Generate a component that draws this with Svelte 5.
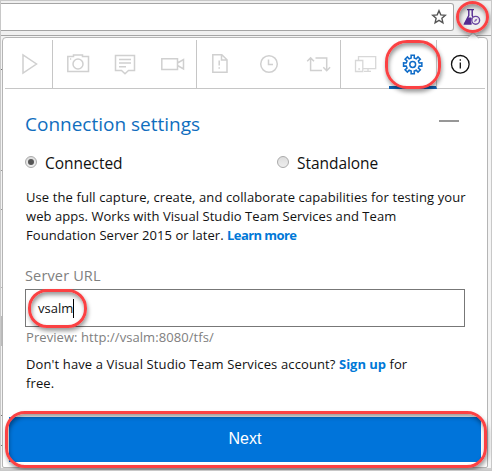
<script>
  const tabs = ['play', 'camera', 'comment', 'video', 'report', 'clock', 'loop', 'devices', 'settings', 'info'];
  const separated = new Set(['play', 'video', 'loop', 'settings']);
  let server = $state('vsalm');

  const gearPoints = Array.from({ length: 8 }, (_, i) => {
    return [[-13, 6.7], [-10, 9.3], [10, 9.3], [13, 6.7]].map(([offset, radius]) => {
      const angle = ((i * 45 + offset) * Math.PI) / 180;
      return `${(12.7 + radius * Math.cos(angle)).toFixed(2)},${(12.5 + radius * Math.sin(angle)).toFixed(2)}`;
    }).join(' ');
  }).join(' ');
</script>

<div class="window">
  <header class="browser">
    <div class="address">
      <svg class="star" width="16" height="16" viewBox="0 0 16 16"><path d="M8 1.7l1.8 4.2 4.5.4-3.4 3 1 4.5L8 11.4l-3.9 2.4 1-4.5-3.4-3 4.5-.4z" /></svg>
    </div>
    <svg class="flask" width="18" height="18" viewBox="0 0 18 18">
      <path d="M4 1.6h7M5.8 2v5.5L1.5 15.8H8M9.2 2v5.5l.8 1.3" fill="none" stroke="#542b91" stroke-width="1.4" />
      <path d="M4.5 9.5h3.8l.5 1.2-1 2.3 1.2 3.4H.8z" fill="#542b91" />
      <circle cx="12.7" cy="12.3" r="3.9" fill="#f0f0f0" stroke="#6842a0" stroke-width="1.4" />
      <path d="M10.8 14.2l1.2-2.6 2.6-1.2-1.2 2.6z" fill="#8b68b8" />
    </svg>
  </header>

  <main class="popup">
    <svg class="pointer" width="12" height="7" viewBox="0 0 12 7"><path d="M0 6.5L6 .5l6 6" fill="#fff" stroke="#bbb" /></svg>
    <nav>
      {#each tabs as tab}
        <button class:sep={separated.has(tab)} class:active={tab === 'settings'} aria-label={tab}>
          <svg width="26" height="24" viewBox="0 0 26 24" class={tab}>
            {#if tab === 'play'}
              <path d="M6 3v18L19.5 12z" />
            {:else if tab === 'camera'}
              <path d="M3.8 4.5H9.5V3h9v1.5h6v15H3.8z" /><circle cx="14" cy="12" r="5" /><path d="M6 7h1.2" />
            {:else if tab === 'comment'}
              <path d="M3.5 3.5h19v15h-6L13 21.7l-3.5-3.2h-6zM7 7.5h12M7 11h12M7 14.7h7" />
            {:else if tab === 'video'}
              <path d="M1.8 6.8h15.7v10.7H1.8zM17.5 11l6-3.5v9.5l-6-3.5" />
            {:else if tab === 'report'}
              <path d="M4.8 2.7h9l5.2 5v12.6H4.8zM13.5 3v5H19M11.2 8.5v5M11.2 15.2v1.6" />
            {:else if tab === 'clock'}
              <circle cx="13" cy="12" r="8.3" /><path d="M12.5 7.5v5H17" />
            {:else if tab === 'loop'}
              <path d="M6.6 6.2v12.4H18M3.2 9.3l3.4-3.4L10 9.3M11.5 6h11.2v12.4M19.3 15.3l3.4 3.4 3.4-3.4" />
            {:else if tab === 'devices'}
              <path d="M6.5 8V4.6h17.2v12H11M3.5 8.5h7.3v11H3.5zM6.3 17h1.8M12 19.4h7M16 16.6v2.8" />
            {:else if tab === 'settings'}
              <polygon points={gearPoints} />
              <circle cx="12.7" cy="12.5" r="2.9" />
            {:else}
              <circle cx="12.3" cy="12.3" r="8.8" /><path d="M12.3 10.5v6M12.3 7.2v1.6" />
            {/if}
          </svg>
        </button>
      {/each}
    </nav>

    <section class="settings-panel">
      <div class="heading"><h1>Connection settings</h1><span class="collapse"></span></div>
      <div class="modes">
        <label><span class="radio checked"></span><span>Connected</span></label>
        <label><span class="radio"></span><span>Standalone</span></label>
      </div>
      <p class="description">
        <span class="d1">Use the full capture, create, and collaborate capabilities for testing your</span><br /><span class="d2">web apps. Works with Visual Studio Team Services and Team</span><br /><span class="d2">Foundation Server 2015 or later. <b class="more">Learn more</b></span>
      </p>
      <div class="label">Server URL</div>
      <div class="field"><span>{server}</span><i class="caret"></i></div>
      <div class="preview">Preview: http://{server}:8080/tfs/</div>
      <p class="signup">Don't have a Visual Studio Team Services account? <b>Sign up</b> for<br />free.</p>
    </section>
    <button class="next">Next</button>
  </main>

  <i class="mark extension"></i>
  <i class="mark gear"></i>
  <i class="mark url"></i>
  <i class="mark submit"></i>
</div>

<style>
  * { box-sizing: border-box; }
  .window {
    position: relative; width: 492px; height: 471px; padding: 0 3px 0 1px; overflow: hidden;
    background:
      linear-gradient(#777, #777) 0 68px / 1px 1px no-repeat,
      linear-gradient(#999, #999) 0 169px / 1px 1px no-repeat,
      linear-gradient(#999, #999) 0 208px / 1px 1px no-repeat,
      linear-gradient(#bbb, #bbb) 0 286px / 1px 1px no-repeat,
      linear-gradient(#bbb, #bbb) 0 315px / 1px 30px no-repeat,
      linear-gradient(#777, #777) 0 414px / 1px 1px no-repeat,
      linear-gradient(#777, #777) 0 444px / 1px 1px no-repeat,
      linear-gradient(#f4f4f4 467px, #cfcfcf 467px);
    border: 1px solid #c8c8c8; font-family: "Open Sans", "Noto Sans", sans-serif; color: #111;
  }
  .browser { height: 35px; margin: 0 -3px 0 -1px; padding-top: 2px; display: flex; background: #f0f0f0; border-bottom: 1px solid #a5a5a5; }
  .address { flex: none; width: 453px; height: 28px; background: #fff; border: 1px solid #a5a5a5; border-left: 0; border-radius: 0 3px 3px 0; display: flex; justify-content: flex-end; align-items: center; padding-right: 6px; }
  .star { fill: none; stroke: #555; stroke-width: 1.4; }
  .flask { flex: none; margin: 5px 0 0 9px; }
  .popup { position: relative; margin-top: 1px; height: 431px; background: #fff; border: 1px solid #b5b5b5; border-radius: 4px 4px 2px 2px; padding: 2px 2px 0 2px; }
  .pointer { position: absolute; left: 464px; top: -6px; }
  nav { height: 49px; display: flex; border-bottom: 1px solid #c6c6c6; }
  nav button { flex: none; width: 48px; height: 48px; padding: 12px 0 0 11px; border: 0; background: none; display: flex; }
  nav button.sep { border-right: 1px solid #c6c6c6; }
  nav button.active { height: 49px; border-bottom: 3px solid #0f62b4; }
  nav svg { flex: none; overflow: visible; fill: none; stroke: #d0d0d0; stroke-width: 1.5; }
  nav svg.play { margin-left: 1px; }
  nav svg.devices { stroke: #d8d8d8; stroke-width: 1.3; }
  nav svg.settings { stroke: #0f6cc8; }
  nav svg.info { stroke: #111; stroke-width: 1.3; }
  .settings-panel { padding: 20px 18px 0 20px; height: 328px; }
  .heading { height: 30px; display: flex; justify-content: space-between; }
  h1 { margin: 0; font-size: 19px; line-height: 30px; font-weight: 400; color: #106ebe; white-space: nowrap; }
  .collapse { width: 20px; height: 2px; background: #979797; margin: 11px 8px 0 0; }
  .modes { display: flex; height: 49px; padding-top: 12px; }
  label { flex: none; display: flex; width: 252px; height: 24px; align-items: center; font-size: 15.5px; letter-spacing: -.05px; line-height: 24px; }
  .radio { width: 12px; height: 12px; margin: 0 8px 2px 0; border: 1px solid #aaa; border-radius: 50%; background: linear-gradient(#ddd, #eee); display: flex; align-items: center; justify-content: center; }
  .checked::after { content: ''; width: 6px; height: 6px; border-radius: 50%; background: #555; }
  p { margin: 0; font-size: 13px; line-height: 19px; white-space: nowrap; }
  .description { height: 69px; padding-left: 1px; }
  .d1 { letter-spacing: .1px; }
  .d2 { letter-spacing: .06px; }
  b { color: #0078d7; letter-spacing: -.05px; }
  .more { letter-spacing: -.58px; }
  .label { height: 32px; padding: 7px 0 0 0; font-size: 14.5px; letter-spacing: .15px; line-height: 23px; color: #808080; }
  .field { width: 440px; height: 38px; border: 1px solid #777; display: flex; align-items: center; padding-left: 12px; font-size: 13px; }
  .caret { width: 1px; height: 19px; background: #000; }
  .preview { height: 28px; padding-left: 1px; font-size: 13px; letter-spacing: .07px; line-height: 20px; color: #808080; }
  .signup { padding-left: 1px; letter-spacing: .12px; }
  .next { display: flex; align-items: center; justify-content: center; width: 472px; height: 45px; margin: 0 0 0 4px; padding: 0 0 2px; border: 0; background: #0074da; color: #fff; font: 16px "Liberation Sans", Arial, sans-serif; }
  .mark { position: absolute; border: 3px solid #fb4143; box-shadow: 1px 3px 4px #0006, inset 1px 3px 4px #0006; }
  .extension { left: 455px; top: 0; width: 33px; height: 32px; border-radius: 50%; }
  .gear { left: 384px; top: 39px; width: 56px; height: 49px; border-radius: 22px; }
  .url { left: 27px; top: 288px; width: 59px; height: 39px; border-radius: 19px; }
  .submit { left: 4px; top: 410px; width: 482px; height: 57px; border-radius: 20px; }
</style>
